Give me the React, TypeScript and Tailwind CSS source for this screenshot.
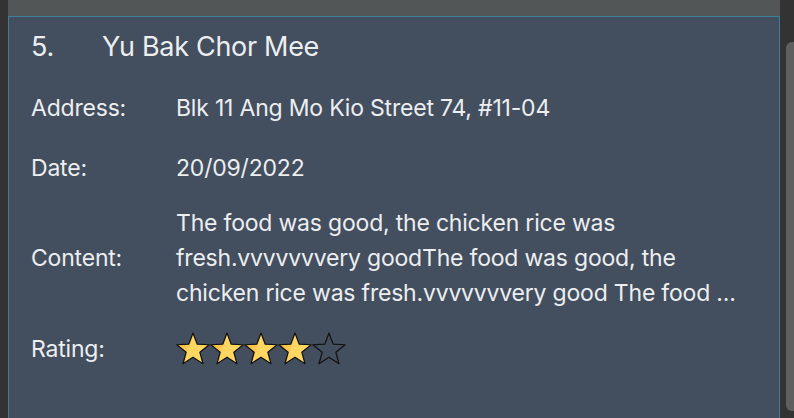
const STAR =
  "17,1 21.23,12.18 33.17,12.75 23.85,20.22 26.99,31.75 17,25.2 7.01,31.75 10.15,20.22 0.83,12.75 12.77,12.18";

function Star({ filled, id }: { filled: boolean; id: string }) {
  return (
    <svg width="34" height="34" viewBox="0 0 34 34" className="block">
      <defs>
        <linearGradient id={id} x1="0" y1="0" x2="1" y2="0.3">
          <stop offset="0" stopColor="#f4b840" />
          <stop offset="0.45" stopColor="#fdc94f" />
          <stop offset="0.5" stopColor="#ffd660" />
          <stop offset="1" stopColor="#ffd862" />
        </linearGradient>
      </defs>
      <polygon
        points={STAR}
        fill={filled ? `url(#${id})` : "none"}
        stroke="#111"
        strokeWidth="1.2"
        strokeLinejoin="round"
      />
    </svg>
  );
}

function Row({ label, children, className = "" }: { label: string; children: React.ReactNode; className?: string }) {
  return (
    <div className={`flex items-center min-h-[60px] ${className}`}>
      <div className="w-[145px] shrink-0">{label}</div>
      <div className="flex-1">{children}</div>
    </div>
  );
}

export default function App() {
  const rating = 4;
  return (
    <div
      className="w-[794px] h-[418px] flex bg-[#333333] overflow-hidden text-[#eceef0]"
      style={{ fontFamily: "Inter, 'Noto Sans', sans-serif" }}
    >
      <div className="w-[8px] shrink-0" />
      <div className="w-[772px] flex flex-col">
        <div className="h-[16px] bg-[#535657] shrink-0" />
        <div className="flex-1 bg-[#434e5f] border border-b-0 border-[#3b8098] pl-[22px] pr-[20px]">
          <div className="flex items-center h-[61px] text-[27px] tracking-[-0.3px]">
            <span className="w-[71px]">5.</span>
            <span>Yu Bak Chor Mee</span>
          </div>
          <div className="text-[23px] tracking-[-0.2px]">
            <Row label="Address:">Blk 11 Ang Mo Kio Street 74, #11-04</Row>
            <Row label="Date:">20/09/2022</Row>
            <Row label="Content:" className="py-[8px]">
              <p className="leading-[35px] w-[575px]">
                The food was good, the chicken rice was fresh.vvvvvvvery goodThe food was good, the chicken rice was fresh.vvvvvvvery good The food ...
              </p>
            </Row>
            <Row label="Rating:">
              <div className="flex">
                {[0, 1, 2, 3, 4].map((i) => (
                  <Star key={i} filled={i < rating} id={`g${i}`} />
                ))}
              </div>
            </Row>
          </div>
        </div>
      </div>
      <div className="w-[14px] shrink-0 pl-[6px] pt-[42px] pb-[7px]">
        <div className="h-full bg-[#5f5f5f] rounded-l-[6px]" />
      </div>
    </div>
  );
}
